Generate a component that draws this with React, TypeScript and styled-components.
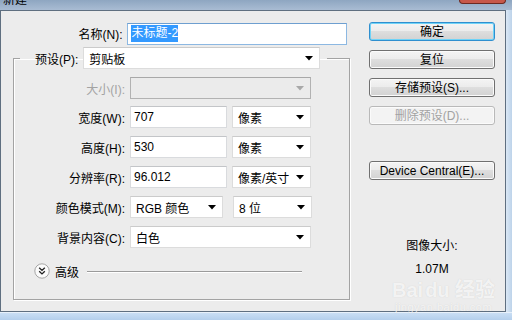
import styled, { createGlobalStyle } from "styled-components";

const GlobalStyle = createGlobalStyle`
    html, body {
        margin: 0;
        padding: 0;
        background: #cfdff0;
    }
    body {
        font-family: "Liberation Sans", "Noto Sans CJK SC", sans-serif;
        font-size: 12px;
        color: #000;
    }
`;

const Arrow = ({ disabled }: { disabled?: boolean }) => (
    <svg width="8" height="5" viewBox="0 0 8 5">
        <path d="M0 0 H8 L4 4.5 Z" fill={disabled ? "#a8a8a8" : "#000"} />
    </svg>
);

const AdvancedIcon = () => (
    <svg width="16" height="16" viewBox="0 0 16 16">
        <circle cx="8" cy="8" r="7.2" fill="#fbfbfb" stroke="#a6a6a6" strokeWidth="1" />
        <path d="M5.2 4.8 L8 7.4 L10.8 4.8 M5.2 8.3 L8 10.9 L10.8 8.3" fill="none" stroke="#222" strokeWidth="1.4" />
    </svg>
);

const App = () => {
    return (
        <Window>
            <GlobalStyle />
            <TitleBar>
                <Title>新建</Title>
                <CloseButton />
            </TitleBar>
            <Middle>
                <Body>
                    <LeftCol>
                        <NameRow>
                            <Label $width={129}>名称(N):</Label>
                            <TextBox $width={224} $focused>
                                <Selected>未标题-2</Selected>
                            </TextBox>
                        </NameRow>
                        <Group>
                            <Legend>
                                <LegendInner>
                                    <span>预设(P):</span>
                                    <SelectBox $width={237}>
                                        剪贴板
                                        <Arrow />
                                    </SelectBox>
                                </LegendInner>
                            </Legend>
                            <Rows>
                                <Row $gapAfter={7}>
                                    <Label $width={116} $disabled>大小(I):</Label>
                                    <SelectBox $width={181} $disabled>
                                        <span />
                                        <Arrow disabled />
                                    </SelectBox>
                                </Row>
                                <Row>
                                    <Label $width={116}>宽度(W):</Label>
                                    <TextBox $width={97}>707</TextBox>
                                    <SelectBox $width={79}>
                                        像素
                                        <Arrow />
                                    </SelectBox>
                                </Row>
                                <Row>
                                    <Label $width={116}>高度(H):</Label>
                                    <TextBox $width={97}>530</TextBox>
                                    <SelectBox $width={79}>
                                        像素
                                        <Arrow />
                                    </SelectBox>
                                </Row>
                                <Row>
                                    <Label $width={116}>分辨率(R):</Label>
                                    <TextBox $width={97}>96.012</TextBox>
                                    <SelectBox $width={79}>
                                        像素/英寸
                                        <Arrow />
                                    </SelectBox>
                                </Row>
                                <Row>
                                    <Label $width={116}>颜色模式(M):</Label>
                                    <SelectBox $width={93} $gapRight={10}>
                                        RGB 颜色
                                        <Arrow />
                                    </SelectBox>
                                    <SelectBox $width={79}>
                                        8 位
                                        <Arrow />
                                    </SelectBox>
                                </Row>
                                <Row>
                                    <Label $width={116}>背景内容(C):</Label>
                                    <SelectBox $width={181}>
                                        白色
                                        <Arrow />
                                    </SelectBox>
                                </Row>
                            </Rows>
                            <Advanced>
                                <AdvancedIcon />
                                <span>高级</span>
                                <Rule />
                            </Advanced>
                        </Group>
                    </LeftCol>
                    <RightCol>
                        <Button $primary>确定</Button>
                        <Button>复位</Button>
                        <Button>存储预设(S)...</Button>
                        <Button disabled>删除预设(D)...</Button>
                        <Button $top={27}>Device Central(E)...</Button>
                        <SizeInfo>
                            <SizeTitle>图像大小:</SizeTitle>
                            <SizeValue>1.07M</SizeValue>
                        </SizeInfo>
                    </RightCol>
                </Body>
                <RightFrame />
            </Middle>
            <BottomFrame />
            <Watermark>
                <WmLogo>Bai<WmPaw>du</WmPaw> 经验</WmLogo>
                <WmUrl>jingyan.baidu.com</WmUrl>
            </Watermark>
        </Window>
    );
};

export default App;

const Window = styled.div`
    position: relative;
    width: 512px;
    height: 320px;
    overflow: hidden;
    display: flex;
    flex-direction: column;
    background: #cfdff0;
`;

const TitleBar = styled.div`
    height: 10px;
    display: flex;
    justify-content: space-between;
    background: linear-gradient(#8ea6c1, #a9bcd3);
    overflow: hidden;
`;

const Title = styled.div`
    margin: -8px 0 0 3px;
    font-size: 12px;
    line-height: 16px;
    color: #000;
`;

const CloseButton = styled.div`
    width: 45px;
    height: 3px;
    margin-right: 6px;
    background: #c7584a;
    border: 1px solid #6d2a22;
    border-top: none;
    border-radius: 0 0 4px 4px;
`;

const Middle = styled.div`
    flex: 1;
    display: flex;
`;

const Body = styled.div`
    flex: 1;
    display: flex;
    background: #ececec;
    border: 1px solid #5f6f80;
    box-sizing: border-box;
`;

const RightFrame = styled.div`
    width: 6px;
    background: linear-gradient(90deg, #dbe8f5, #bdd3ea);
`;

const BottomFrame = styled.div`
    height: 7px;
    background: linear-gradient(#c9def4, #b4cfec);
    border-top: 1px solid #e8f1fb;
`;

const LeftCol = styled.div`
    width: 351px;
    display: flex;
    flex-direction: column;
    padding-top: 11px;
`;

const NameRow = styled.div`
    display: flex;
    align-items: center;
    height: 23px;
`;

const Label = styled.div<{ $width: number; $disabled?: boolean }>`
    width: ${(p) => p.$width}px;
    box-sizing: border-box;
    padding-right: 5px;
    text-align: right;
    color: ${(p) => (p.$disabled ? "#a3a3a3" : "#000")};
    white-space: nowrap;
`;

const TextBox = styled.div<{ $width: number; $focused?: boolean }>`
    width: ${(p) => p.$width}px;
    height: 22px;
    box-sizing: border-box;
    display: flex;
    align-items: center;
    padding-left: 3px;
    margin-right: 5px;
    background: #fff;
    border: 1px solid ${(p) => (p.$focused ? "#8cb8e2" : "#d9dbde")};
    border-top-color: ${(p) => (p.$focused ? "#6e9fd0" : "#c3c5c8")};
`;

const Selected = styled.span`
    background: #3399ff;
    color: #fff;
    padding: 1px 0;
    line-height: 15px;
`;

const SelectBox = styled.div<{ $width: number; $disabled?: boolean; $gapRight?: number }>`
    width: ${(p) => p.$width}px;
    height: 22px;
    box-sizing: border-box;
    display: flex;
    align-items: center;
    justify-content: space-between;
    padding: 0 6px 0 5px;
    margin-right: ${(p) => p.$gapRight ?? 0}px;
    background: ${(p) => (p.$disabled ? "#ebebeb" : "#fff")};
    border: 1px solid ${(p) => (p.$disabled ? "#b2b2b2" : "#dcdcdc")};
    border-top-color: ${(p) => (p.$disabled ? "#a8a8a8" : "#cbcbcb")};
    white-space: nowrap;
`;

const Group = styled.fieldset`
    margin: 2px 0 0 12px;
    width: 337px;
    box-sizing: border-box;
    padding: 0 0 20px 0;
    border: 1px solid #a3a3a3;
    box-shadow: 1px 1px 0 #fff, inset 1px 1px 0 #fff;
    min-inline-size: 0;
`;

const Legend = styled.legend`
    margin-left: 6px;
    padding: 0 7px 0 15px;
`;

const LegendInner = styled.div`
    display: flex;
    align-items: center;
    gap: 5px;
`;

const Rows = styled.div`
    display: flex;
    flex-direction: column;
    gap: 8px;
    margin-top: 8px;
`;

const Row = styled.div<{ $gapAfter?: number }>`
    display: flex;
    align-items: center;
    margin-bottom: ${(p) => (p.$gapAfter ? p.$gapAfter - 8 : 0)}px;
`;

const Advanced = styled.div`
    display: flex;
    align-items: center;
    gap: 5px;
    margin: 15px 0 0 20px;
    height: 16px;
`;

const Rule = styled.div`
    width: 215px;
    margin-left: 3px;
    height: 1px;
    background: #9b9b9b;
    box-shadow: 0 1px 0 #fff;
`;

const RightCol = styled.div`
    display: flex;
    flex-direction: column;
    padding: 11px 0 0 17px;
    width: 126px;
`;

const Button = styled.button<{ $primary?: boolean; $top?: number }>`
    width: 126px;
    height: 19px;
    margin: ${(p) => p.$top ?? 0}px 0 9px 0;
    padding: 0;
    font: inherit;
    font-size: 12px;
    line-height: 16px;
    color: ${(p) => (p.disabled ? "#a2a2a2" : "#000")};
    border-radius: 3px;
    border: 1px solid ${(p) => (p.$primary ? "#2f8fcf" : p.disabled ? "#b9b9b9" : "#707070")};
    background: ${(p) =>
        p.disabled
            ? "#f3f3f3"
            : "linear-gradient(#f4f4f4 0%, #ececec 45%, #dedede 50%, #d2d2d2 100%)"};
    box-shadow: ${(p) => (p.$primary ? "inset 0 0 0 1px #6fd3f7" : "inset 0 0 0 1px #fbfbfb")};
`;

const SizeInfo = styled.div`
    display: flex;
    flex-direction: column;
    align-items: center;
    gap: 9px;
    margin-top: 50px;
`;

const SizeTitle = styled.div`
    line-height: 14px;
`;

const SizeValue = styled.div`
    line-height: 14px;
`;

const Watermark = styled.div`
    position: absolute;
    left: 392px;
    top: 279px;
    display: flex;
    flex-direction: column;
    align-items: center;
    color: rgba(255, 255, 255, 0.75);
    text-shadow: 0 0 1px rgba(150, 150, 150, 0.35);
    pointer-events: none;
`;

const WmLogo = styled.div`
    font-family: "Liberation Sans", "Noto Sans CJK SC", sans-serif;
    font-weight: bold;
    font-size: 20px;
    line-height: 22px;
`;

const WmPaw = styled.span`
    margin-left: 2px;
`;

const WmUrl = styled.div`
    font-size: 11px;
    line-height: 12px;
    letter-spacing: 0.5px;
`;
